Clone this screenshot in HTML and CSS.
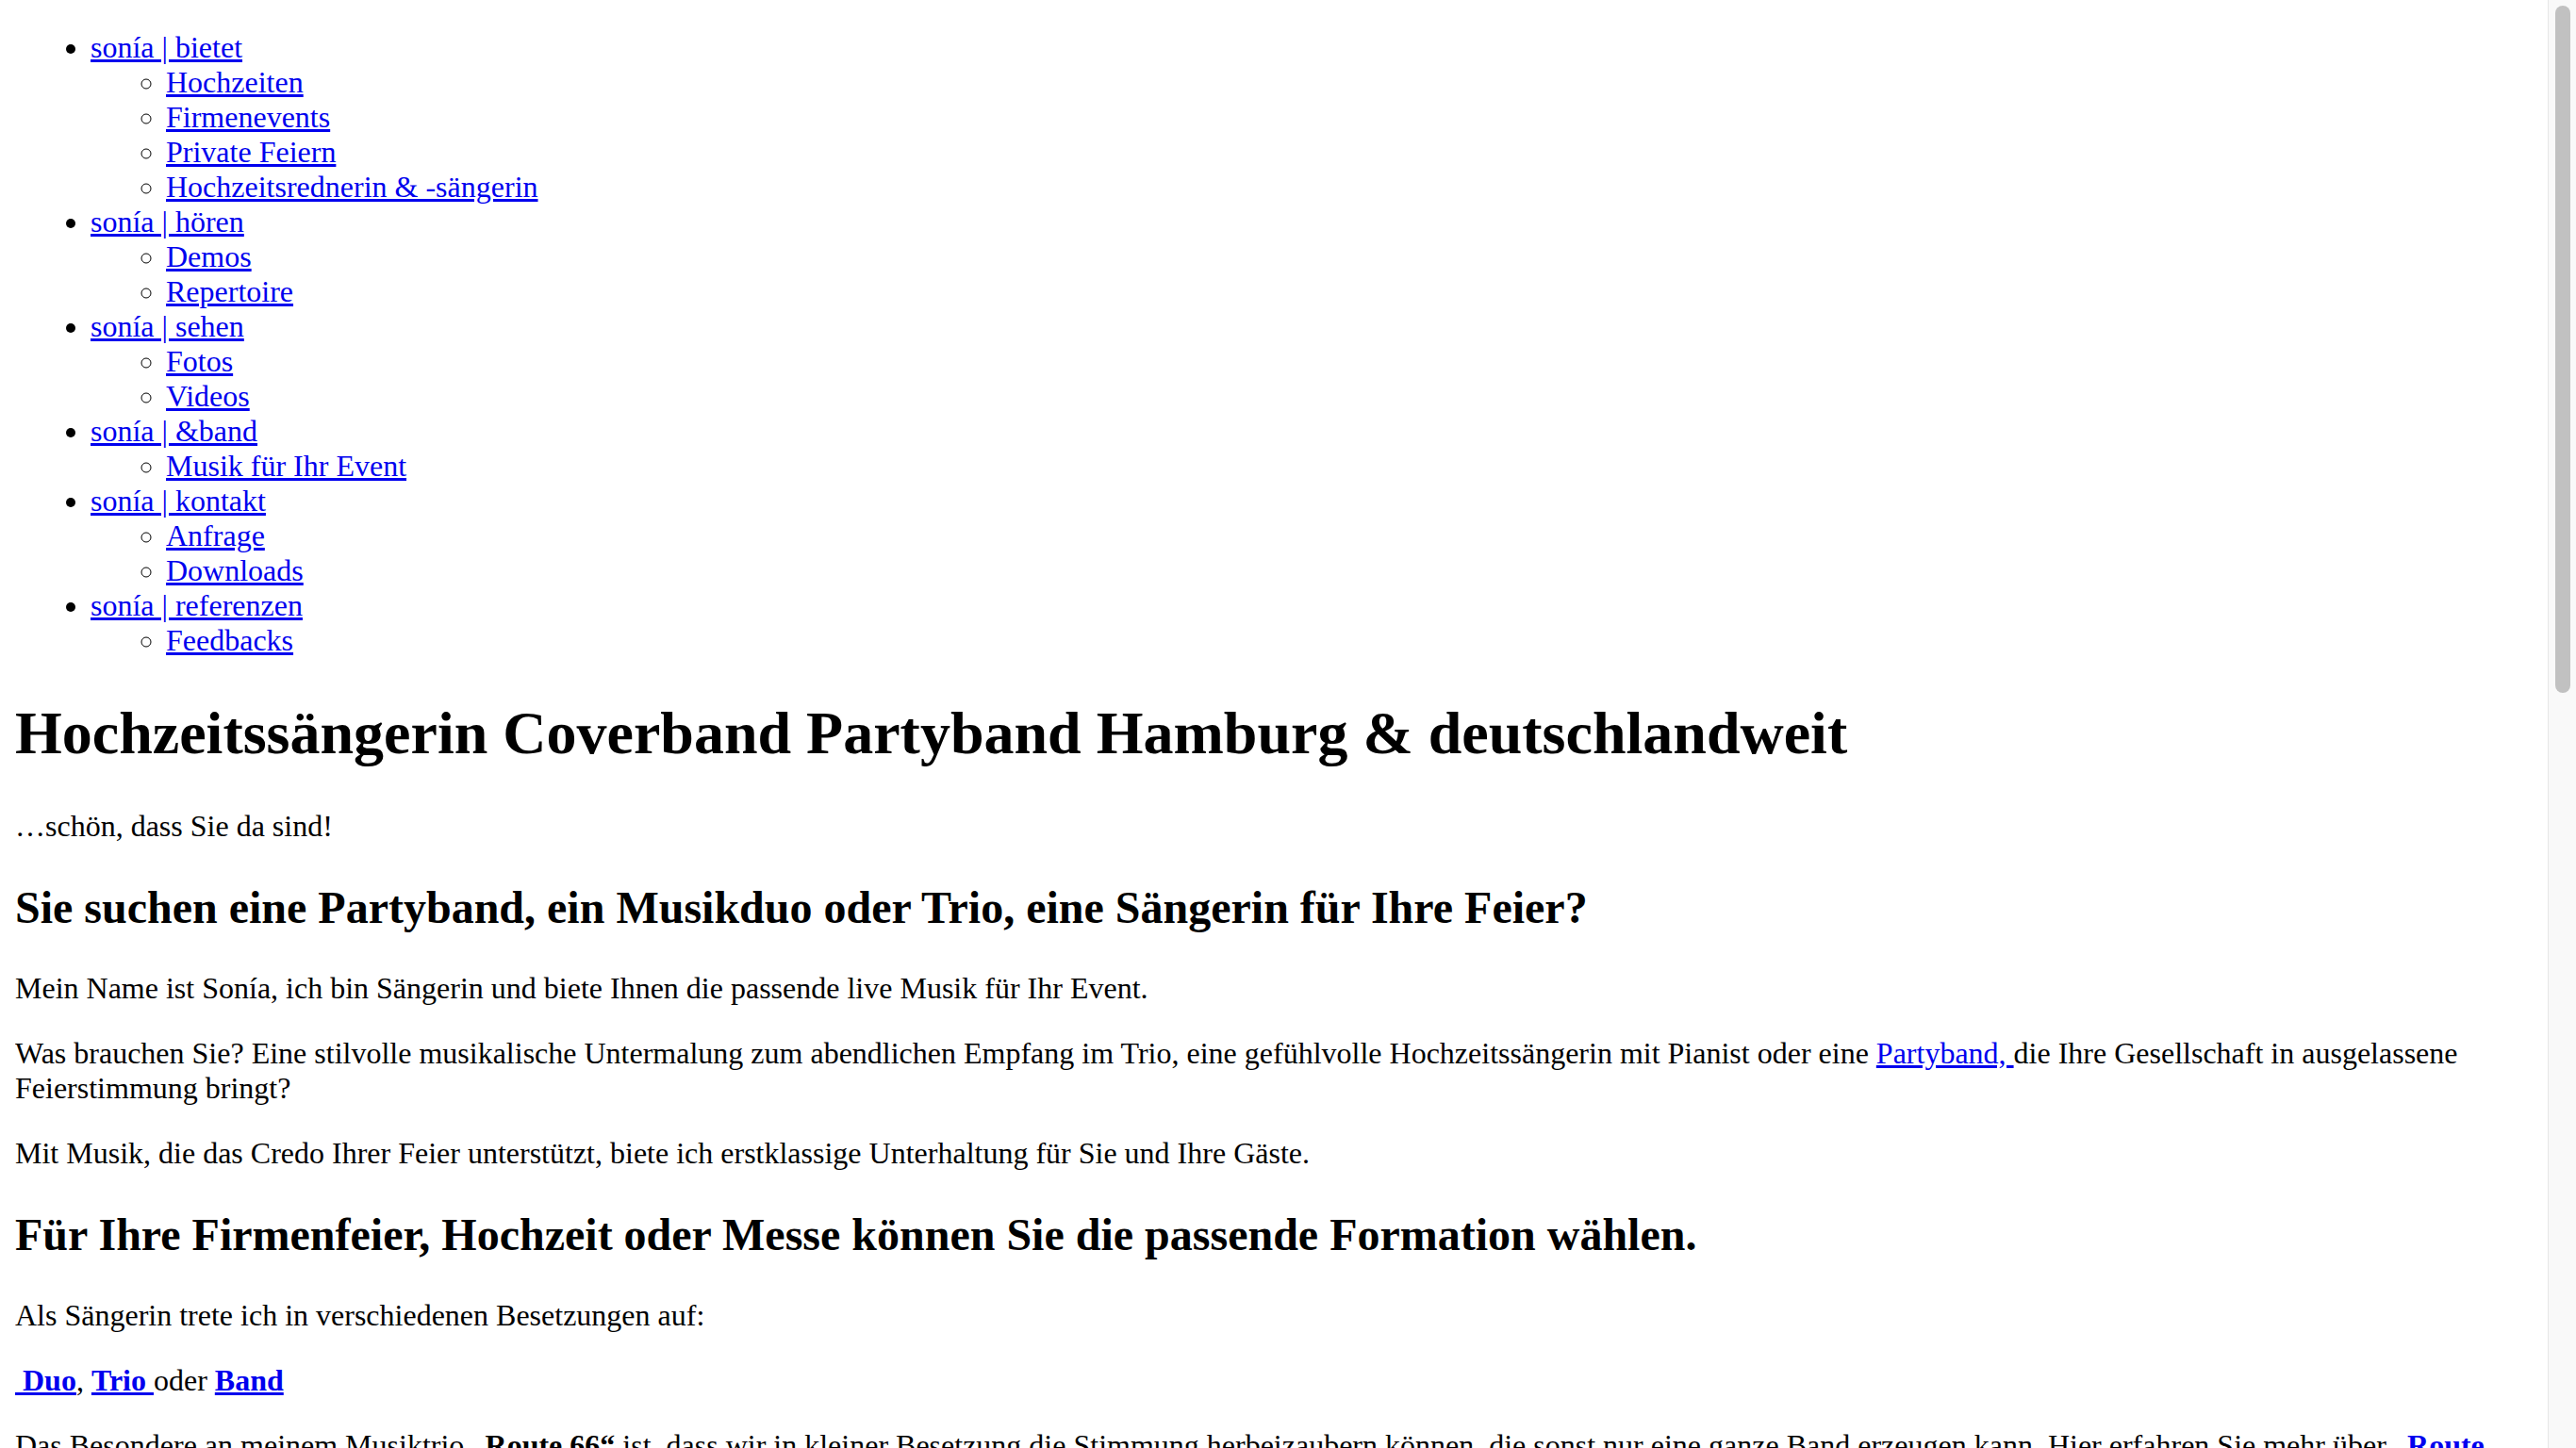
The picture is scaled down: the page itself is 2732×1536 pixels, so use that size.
FILE: index.html
```html
<!DOCTYPE html>
<html lang="de">
<head>
<meta charset="utf-8">
<title>Hochzeitssängerin Coverband Partyband Hamburg &amp; deutschlandweit</title>
<link rel="stylesheet" href="styles.css">
</head>
<body>
<div class="page">
<ul class="menu">
  <li><a href="#">sonía | bietet</a>
    <ul class="sub">
      <li><a href="#">Hochzeiten</a></li>
      <li><a href="#">Firmenevents</a></li>
      <li><a href="#">Private Feiern</a></li>
      <li><a href="#">Hochzeitsrednerin &amp; -sängerin</a></li>
    </ul>
  </li>
  <li><a href="#">sonía | hören</a>
    <ul class="sub">
      <li><a href="#">Demos</a></li>
      <li><a href="#">Repertoire</a></li>
    </ul>
  </li>
  <li><a href="#">sonía | sehen</a>
    <ul class="sub">
      <li><a href="#">Fotos</a></li>
      <li><a href="#">Videos</a></li>
    </ul>
  </li>
  <li><a href="#">sonía | &amp;band</a>
    <ul class="sub">
      <li><a href="#">Musik für Ihr Event</a></li>
    </ul>
  </li>
  <li><a href="#">sonía | kontakt</a>
    <ul class="sub">
      <li><a href="#">Anfrage</a></li>
      <li><a href="#">Downloads</a></li>
    </ul>
  </li>
  <li><a href="#">sonía | referenzen</a>
    <ul class="sub">
      <li><a href="#">Feedbacks</a></li>
    </ul>
  </li>
</ul>

<h1 class="title">Hochzeitssängerin Coverband Partyband Hamburg &amp; deutschlandweit</h1>
<p class="text">…schön, dass Sie da sind!</p>
<h2 class="subtitle">Sie suchen eine Partyband, ein Musikduo oder Trio, eine Sängerin für Ihre Feier?</h2>
<p class="text">Mein Name ist Sonía, ich bin Sängerin und biete Ihnen die passende live Musik für Ihr Event.</p>
<p class="text">Was brauchen Sie? Eine stilvolle musikalische Untermalung zum abendlichen Empfang im Trio, eine gefühlvolle Hochzeitssängerin mit Pianist oder eine <a href="#">Partyband, </a>die Ihre Gesellschaft in ausgelassene Feierstimmung bringt?</p>
<p class="text">Mit Musik, die das Credo Ihrer Feier unterstützt, biete ich erstklassige Unterhaltung für Sie und Ihre Gäste.</p>
<h2 class="subtitle">Für Ihre Firmenfeier, Hochzeit oder Messe können Sie die passende Formation wählen.</h2>
<p class="text">Als Sängerin trete ich in verschiedenen Besetzungen auf:</p>
<p class="text"><a href="#"><strong>&nbsp;Duo</strong></a>, <a href="#"><strong>Trio </strong></a>oder <a href="#"><strong>Band</strong></a></p>
<p class="text">Das Besondere an meinem Musiktrio „<strong>Route 66“</strong> ist, dass wir in kleiner Besetzung die Stimmung herbeizaubern können, die sonst nur eine ganze Band erzeugen kann. Hier erfahren Sie mehr über „<a href="#"><strong>Route 66</strong></a>“.</p>
</div>
<div class="scrollbar" aria-hidden="true"><div class="scrollbar-thumb"></div></div>
</body>
</html>
```

FILE: styles.css
```css
html {
  background: #ffffff;
}

body {
  margin: 0 46px 16px 16px;
  font-family: "Liberation Serif", "Times New Roman", serif;
  font-size: 32px;
  color: #000000;
}

.page {
  min-height: 3170px;
}

a {
  color: #0000ee;
}

.menu {
  margin: 32px 0;
  padding-left: 80px;
  list-style: disc;
}

.sub {
  margin: 0;
  padding-left: 80px;
  list-style: circle;
}

.title {
  font-size: 64px;
  margin: 43px 0;
}

.subtitle {
  font-size: 48px;
  margin: 40px 0;
}

.text {
  margin: 32px 0;
}

.scrollbar {
  position: fixed;
  top: 0;
  right: 0;
  width: 29px;
  height: 100vh;
  background: #f9f9f9;
  border-left: 1px solid #e6e6e6;
}

.scrollbar-thumb {
  margin: 6px 0 0 7px;
  width: 16px;
  height: 729px;
  background: #c1c1c1;
  border-radius: 8px;
}
```
